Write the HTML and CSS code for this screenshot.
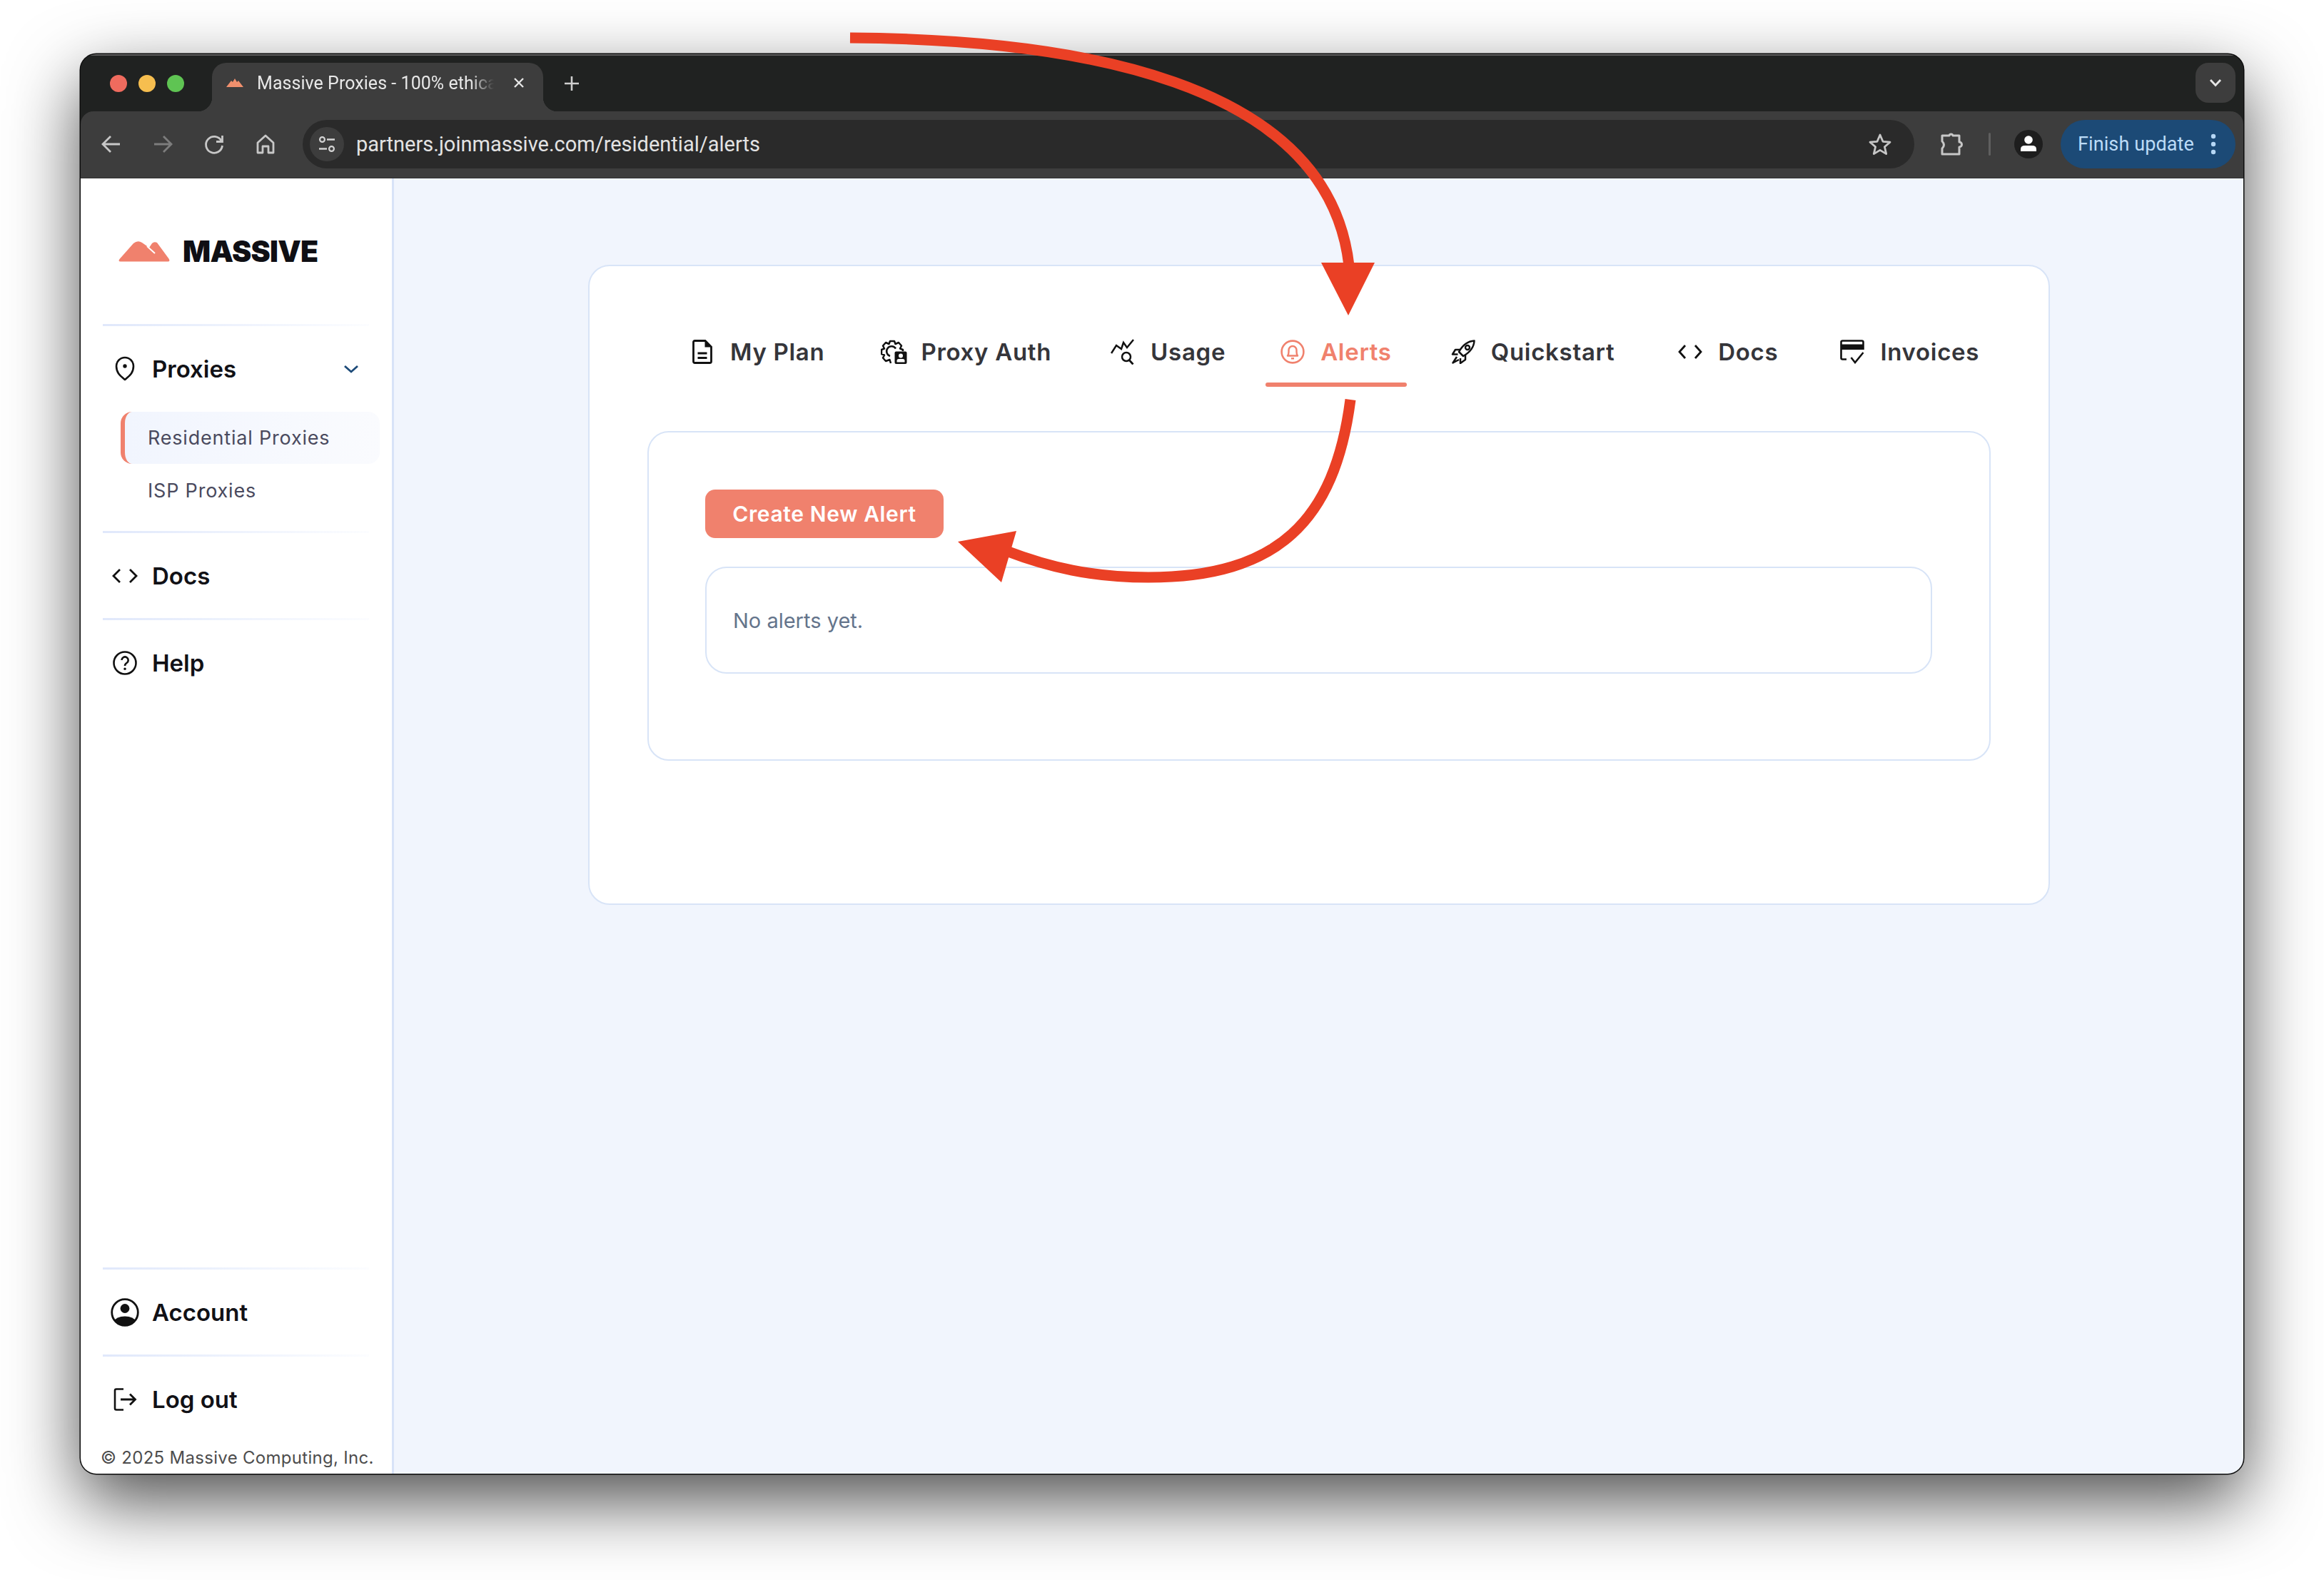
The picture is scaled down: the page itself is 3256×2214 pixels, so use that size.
FILE: index.html
```html
<!DOCTYPE html>
<html lang="en">
<head>
<meta charset="utf-8">
<title>Massive Proxies - Alerts</title>
<link rel="stylesheet" href="styles.css">
</head>
<body>
<div class="window">
  <header class="titlebar">
    <div class="lights"><span class="light red"></span><span class="light yellow"></span><span class="light green"></span></div>
    <div class="tab">
      <svg class="favicon" viewBox="0 0 26 14"><path d="M1 13 L8 4 L10 6 L13 1 L16 6 L18 4 L25 13Z" fill="#f0906d"/></svg>
      <span class="tab-title">Massive Proxies - 100% ethical</span>
      <svg class="tab-close" viewBox="0 0 20 20"><path d="M4 4 L16 16 M16 4 L4 16" stroke="#e6e6e6" stroke-width="2.4" fill="none"/></svg>
    </div>
    <svg class="new-tab" viewBox="0 0 22 22"><path d="M11 1 V21 M1 11 H21" stroke="#cfcfcf" stroke-width="2.6" fill="none"/></svg>
    <div class="tab-menu"><svg viewBox="0 0 18 12"><path d="M2 2 L9 9.5 L16 2" stroke="#e6e6e6" stroke-width="2.8" fill="none"/></svg></div>
  </header>
  <div class="toolbar">
    <div class="nav-btns">
      <svg class="tool" viewBox="0 0 44 44"><path d="M34 22 H11 M21 11 L10 22 L21 33" stroke="#c7c7c7" stroke-width="2.8" fill="none"/></svg>
      <svg class="tool" viewBox="0 0 44 44"><path d="M10 22 H33 M23 11 L34 22 L23 33" stroke="#7d7d7d" stroke-width="2.8" fill="none"/></svg>
      <svg class="tool" viewBox="0 0 44 44"><path d="M32 17 A11.5 11.5 0 1 0 33.5 24" stroke="#c7c7c7" stroke-width="2.8" fill="none"/><path d="M33.5 10 V18.5 H25" stroke="#c7c7c7" stroke-width="2.8" fill="none"/></svg>
      <svg class="tool" viewBox="0 0 44 44"><path d="M11 20 L22 10 L33 20 V34 H26 V25 H18 V34 H11Z" stroke="#c7c7c7" stroke-width="2.8" fill="none" stroke-linejoin="round"/></svg>
    </div>
    <div class="urlbar">
      <span class="site-info"><svg viewBox="0 0 26 26"><circle cx="6.5" cy="6.5" r="3.4" stroke="#d4d4d4" stroke-width="2.2" fill="none"/><path d="M13 6.5 H24 M2 19.5 H13" stroke="#d4d4d4" stroke-width="2.4"/><circle cx="19.5" cy="19.5" r="3.4" stroke="#d4d4d4" stroke-width="2.2" fill="none"/></svg></span>
      <span class="url">partners.joinmassive.com/residential/alerts</span>
      <svg class="tool star" viewBox="0 0 44 44"><path d="M22 9 L26 18.3 L36 19.2 L28.4 25.8 L30.7 35.6 L22 30.4 L13.3 35.6 L15.6 25.8 L8 19.2 L18 18.3Z" stroke="#c7c7c7" stroke-width="2.8" fill="none" stroke-linejoin="round"/></svg>
    </div>
    <svg class="tool ext" viewBox="0 0 44 44"><path d="M9 10 H19 A2.600 2.600 0 0 1 24 10 H33 V19 A3.200 3.200 0 0 1 33 26 V36 H9 V28 Q14 23 9 18Z" stroke="#c7c7c7" stroke-width="3" fill="none" stroke-linejoin="round"/></svg>
    <span class="tool-sep"></span>
    <span class="avatar"><svg viewBox="0 0 40 40"><circle cx="20" cy="14" r="5.8" fill="#fff"/><path d="M9 30 V27 Q9 22 15 22 H25 Q31 22 31 27 V30Z" fill="#fff"/></svg></span>
    <div class="update"><span>Finish update</span><svg viewBox="0 0 8 32"><circle cx="4" cy="5" r="3.2" fill="#b6d7f5"/><circle cx="4" cy="16" r="3.2" fill="#b6d7f5"/><circle cx="4" cy="27" r="3.2" fill="#b6d7f5"/></svg></div>
  </div>

  <div class="app">
    <aside class="sidebar">
      <div class="logo">
        <svg class="logo-mark" viewBox="0 0 72 30"><path d="M3 29.5 Q-1 29.5 1.5 26 L21 4 Q27 -1 33 3 L43 10 L47 4 Q50 1 54 3 L70.5 25.5 Q73 29.5 69 29.5Z" fill="#f0816d"/><path d="M40 8 L51 18" stroke="#fff" stroke-width="2" fill="none"/></svg>
        <span class="logo-text">MASSIVE</span>
      </div>
      <div class="divider"></div>
      <div class="nav-row">
        <svg class="nav-icon" viewBox="0 0 36 36"><path d="M18 33.5 C13 29 6 25 6 14.5 A12 12 0 0 1 30 14.5 C30 25 23 29 18 33.5Z" transform="translate(0 -.5)" stroke="#111" stroke-width="2.6" fill="none" stroke-linejoin="round"/><circle cx="18" cy="14" r="2.7" fill="#111"/></svg>
        <span>Proxies</span>
        <svg class="chevron" viewBox="0 0 22 12"><path d="M2 2 L11 10 L20 2" stroke="#1c4a78" stroke-width="2.8" fill="none"/></svg>
      </div>
      <a class="sub-item active">Residential Proxies</a>
      <a class="sub-item">ISP Proxies</a>
      <div class="divider after-sub"></div>
      <div class="nav-row">
        <svg class="nav-icon" viewBox="0 0 36 36"><path d="M11 9 L2 18 L11 27 M25 9 L34 18 L25 27" stroke="#111" stroke-width="2.8" fill="none"/></svg>
        <span>Docs</span>
      </div>
      <div class="divider"></div>
      <div class="nav-row">
        <svg class="nav-icon" viewBox="0 0 36 36"><circle cx="18" cy="18" r="15.5" stroke="#111" stroke-width="2.6" fill="none"/><path d="M13.5 14 A4.6 4.6 0 1 1 20.5 18 Q18 19.5 18 22" stroke="#111" stroke-width="2.6" fill="none"/><circle cx="18" cy="26.2" r="1.7" fill="#111"/></svg>
        <span>Help</span>
      </div>
      <div class="sidebar-bottom">
        <div class="divider"></div>
        <div class="nav-row">
          <svg class="nav-icon large" viewBox="0 0 40 40"><defs><clipPath id="acc"><circle cx="20" cy="20" r="18"/></clipPath></defs><circle cx="20" cy="20" r="18.3" stroke="#111" stroke-width="2.8" fill="none"/><circle cx="20" cy="14.5" r="6.4" fill="#111"/><path d="M4 40 V33 Q8 25.500 20 25.500 Q32 25.500 36 33 V40Z" fill="#111" clip-path="url(#acc)"/></svg>
          <span>Account</span>
        </div>
        <div class="divider"></div>
        <div class="nav-row">
          <svg class="nav-icon" viewBox="0 0 36 36"><path d="M16 3.500 H6 Q4 3.500 4 5.500 V30.500 Q4 32.500 6 32.500 H16" stroke="#111" stroke-width="2.600" fill="none"/><path d="M12 18 H32 M25 10.500 L32.500 18 L25 25.500" stroke="#111" stroke-width="2.800" fill="none"/></svg>
          <span>Log out</span>
        </div>
        <p class="copyright">© 2025 Massive Computing, Inc.</p>
      </div>
    </aside>

    <main class="main">
      <section class="card">
        <nav class="tabs">
          <a class="page-tab"><svg class="tab-icon" viewBox="0 0 34 34"><path d="M6.500 1.500 H21 L29.500 10 V30.500 Q29.500 32.500 27.500 32.500 H6.500 Q4.500 32.500 4.500 30.500 V3.500 Q4.500 1.500 6.500 1.500Z" stroke="#111" stroke-width="2.800" fill="none"/><path d="M20.500 1.500 V10.500 H29.500 Z" fill="#111"/><path d="M10.500 19 H23.500 M10.500 25.500 H23.500" stroke="#111" stroke-width="2.800"/></svg>My Plan</a>
          <a class="page-tab"><svg class="tab-icon wide" viewBox="0 0 37 34"><path d="M14 33 L12.500 28 L7 30 L3 25.500 L5 21.500 L1 20 V14 L5 12.500 L3 8.500 L7 4 L11.500 6 L13 2 H19 L20.500 6 L25 4 L29 8.500 L27 12.500 L31 14 V16" stroke="#111" stroke-width="2.500" fill="none" stroke-linejoin="round"/><path d="M21 12.500 A7 7 0 1 0 13 23" stroke="#111" stroke-width="2.500" fill="none"/><rect x="19.500" y="16.500" width="17" height="17.500" rx="2" fill="#111"/><circle cx="28" cy="22.500" r="3" fill="#fff"/><path d="M22.500 31.500 V29.500 Q22.500 27 25 27 H31 Q33.500 27 33.500 29.500 V31.500Z" fill="#fff"/></svg>Proxy Auth</a>
          <a class="page-tab"><svg class="tab-icon tall" viewBox="0 0 34 36"><path d="M1 20 L8 9 L15 14 L18 5 L23 12 L32 1" stroke="#111" stroke-width="2.500" fill="none"/><circle cx="22" cy="25" r="6" stroke="#111" stroke-width="2.500" fill="none"/><path d="M26 29.500 L31.500 35.500" stroke="#111" stroke-width="2.800"/></svg>Usage</a>
          <a class="page-tab current"><svg class="tab-icon" viewBox="0 0 34 34"><circle cx="17" cy="17" r="15.400" stroke="#f0816d" stroke-width="2.600" fill="none"/><path d="M10 22.500 H24 Q22.500 20.500 22.500 17 V14.500 A5.500 5.500 0 0 0 11.500 14.500 V17 Q11.500 20.500 10 22.500Z" stroke="#f0816d" stroke-width="2.400" fill="none" stroke-linejoin="round"/><path d="M15 26.300 H19" stroke="#f0816d" stroke-width="2.400"/></svg>Alerts</a>
          <a class="page-tab"><svg class="tab-icon" viewBox="0 0 34 34"><path d="M32.500 1.500 C24 2 16 8 11 17 L17 23 C26 18 32 10 32.500 1.500Z" stroke="#111" stroke-width="2.500" fill="none" stroke-linejoin="round"/><circle cx="23" cy="11" r="3" stroke="#111" stroke-width="2.400" fill="none"/><path d="M12.500 14 H6 L2 20.500 L9.500 20.500 M20 21.500 V28 L13 33 V26" stroke="#111" stroke-width="2.500" fill="none" stroke-linejoin="round"/><path d="M8 24 L2.500 32.500 L11 28" stroke="#111" stroke-width="2.500" fill="none" stroke-linejoin="round"/></svg>Quickstart</a>
          <a class="page-tab"><svg class="tab-icon" viewBox="0 0 34 34"><path d="M10 8 L2 17 L10 26 M24 8 L32 17 L24 26" stroke="#111" stroke-width="2.800" fill="none"/></svg>Docs</a>
          <a class="page-tab"><svg class="tab-icon" viewBox="0 0 34 34"><path d="M9 27.500 H3.500 Q1.500 27.500 1.500 25.500 V3.500 Q1.500 1.500 3.500 1.500 H30.500 Q32.500 1.500 32.500 3.500 V14" stroke="#111" stroke-width="2.600" fill="none"/><rect x="1.500" y="6.500" width="31" height="7.500" fill="#111"/><path d="M15.500 25 L21 32 L32.500 18" stroke="#111" stroke-width="2.600" fill="none"/></svg>Invoices</a>
        </nav>
        <div class="panel">
          <button class="create-btn">Create New Alert</button>
          <div class="empty">No alerts yet.</div>
        </div>
      </section>
    </main>
  </div>
</div>

<svg class="annotations" viewBox="0 0 3256 2214">
  <path d="M1191 53 C1500 55 1860 110 1890 372" stroke="#ea4025" stroke-width="15" fill="none"/>
  <polygon points="1851,368 1926,368 1889,442" fill="#ea4025"/>
  <path d="M1892 560 C1870 730 1790 809 1609 809 C1530 809 1470 795 1410 772" stroke="#ea4025" stroke-width="15" fill="none"/>
  <polygon points="1342,759 1424,744 1403,816" fill="#ea4025"/>
</svg>
</body>
</html>
```
FILE: styles.css
```css
* { box-sizing: border-box; }
html, body { margin: 0; padding: 0; }
body {
  position: relative;
  width: 3256px;
  height: 2214px;
  padding: 76px 113px 0;
  background: #fff;
  overflow: hidden;
  font-family: "Inter", "Liberation Sans", sans-serif;
}
.window {
  width: 3030px;
  height: 1989px;
  display: flex;
  flex-direction: column;
  border-radius: 22px;
  overflow: hidden;
  background: #202221;
  box-shadow: 0 0 0 1.5px #0c0c0c, 0 38px 100px rgba(0, 0, 0, .7);
}

/* browser chrome */
.titlebar {
  height: 80px;
  flex: none;
  display: flex;
  align-items: flex-end;
  background: #202221;
  border-top: 2px solid #5c5c5c;
}
.lights { display: flex; gap: 16px; align-self: center; margin-left: 41px; }
.light { width: 24px; height: 24px; border-radius: 50%; }
.red { background: #ef6b5e; }
.yellow { background: #f6be4f; }
.green { background: #5fc453; }
.tab {
  position: relative;
  margin-left: 39px;
  width: 464px;
  height: 68px;
  display: flex;
  align-items: center;
  padding: 0 0 12px 19px;
  background: #3d3d3d;
  border-radius: 20px 20px 0 0;
}
.tab::before, .tab::after {
  content: "";
  position: absolute;
  bottom: 0;
  width: 20px;
  height: 20px;
}
.tab::before { left: -20px; background: radial-gradient(circle at 0 0, #202221 20px, #3d3d3d 20.5px); }
.tab::after { right: -20px; background: radial-gradient(circle at 100% 0, #202221 20px, #3d3d3d 20.5px); }
.favicon { width: 26px; height: 14px; flex: none; }
.tab-title {
  margin-left: 18px;
  width: 332px;
  white-space: nowrap;
  overflow: hidden;
  font: 400 25px "Roboto", sans-serif;
  letter-spacing: .05px;
  color: #e8e8e8;
  -webkit-mask-image: linear-gradient(90deg, #000 90%, transparent);
  mask-image: linear-gradient(90deg, #000 90%, transparent);
}
.tab-close { width: 20px; height: 20px; margin-left: 25px; flex: none; }
.new-tab { width: 22px; height: 22px; align-self: center; margin-left: 29px; }
.tab-menu {
  width: 56px;
  height: 56px;
  margin: 10px 11px 0 auto;
  align-self: flex-start;
  display: flex;
  align-items: center;
  justify-content: center;
  background: #3d3d3d;
  border-radius: 18px;
}
.tab-menu svg { width: 18px; height: 12px; }

.toolbar {
  height: 94px;
  flex: none;
  display: flex;
  align-items: center;
  padding-bottom: 1px;
  background: #3d3d3d;
  border-bottom: 1px solid #2f2f2f;
  border-radius: 18px 18px 0 0;
}
.nav-btns { display: flex; gap: 28px; margin-left: 21px; }
.tool { width: 44px; height: 44px; flex: none; }
.urlbar {
  width: 2258px;
  height: 68px;
  margin-left: 30px;
  display: flex;
  align-items: center;
  padding: 0 26px 0 10px;
  background: #2a2a2a;
  border-radius: 34px;
}
.site-info {
  width: 48px;
  height: 48px;
  flex: none;
  display: flex;
  align-items: center;
  justify-content: center;
  background: #3d3d3d;
  border-radius: 50%;
}
.site-info svg { width: 26px; height: 26px; }
.url { margin-left: 17px; font: 400 29px "Roboto", sans-serif; color: #e3e3e3; }
.star { margin-left: auto; }
.ext { margin-left: 30px; }
.tool-sep { width: 3px; height: 32px; margin-left: 30px; background: #5f5f5f; border-radius: 2px; }
.avatar { width: 40px; height: 40px; margin-left: 33px; background: #1e1e1e; border-radius: 50%; }
.avatar svg { display: block; width: 40px; height: 40px; }
.update {
  width: 245px;
  height: 68px;
  margin-left: 25px;
  display: flex;
  align-items: center;
  padding-left: 24px;
  background: #1c4a76;
  border-radius: 34px;
  font: 400 27px "Roboto", sans-serif;
  letter-spacing: .1px;
  color: #bcdcf7;
}
.update svg { width: 8px; height: 32px; margin-left: 23px; }

/* app layout */
.app { flex: 1; min-height: 0; display: flex; }
.sidebar {
  width: 439px;
  flex: none;
  display: flex;
  flex-direction: column;
  padding: 0 32px 0 31px;
  background: #fff;
  border-right: 3px solid #d8e3f8;
}
.logo { height: 204px; flex: none; display: flex; align-items: center; gap: 18px; padding-left: 22px; }
.logo-mark { width: 72px; height: 30px; flex: none; }
.logo-text { font-size: 41px; font-weight: 900; color: #0f0f14; letter-spacing: -.8px; line-height: 1; }
.divider { height: 3px; flex: none; background: linear-gradient(90deg, #e0e8fb, #fcfdff); }
.divider.after-sub { margin-top: 20px; }
.nav-row {
  height: 119px;
  flex: none;
  display: flex;
  align-items: center;
  gap: 20px;
  padding-left: 13px;
  font-size: 33px;
  font-weight: 600;
  color: #111116;
}
.nav-icon { width: 36px; height: 36px; flex: none; }
.nav-icon.large { width: 40px; height: 40px; margin: 0 -2px; }
.chevron { width: 22px; height: 12px; margin-left: auto; margin-right: 14px; }
.sub-item {
  width: 363px;
  height: 73px;
  flex: none;
  display: flex;
  align-items: center;
  margin: 1px 0 0 25px;
  padding-left: 38px;
  border-radius: 16px;
  font-size: 27px;
  letter-spacing: .8px;
  color: #4a4a5e;
}
.sub-item.active {
  padding-left: 32px;
  border-left: 6px solid #f0816d;
  background: linear-gradient(90deg, #f1f5fe, #fafbfe);
}
.sidebar-bottom { margin-top: auto; display: flex; flex-direction: column; }
.copyright {
  height: 45px;
  margin: 0 0 0 -3px;
  white-space: nowrap;
  font-size: 24px;
  line-height: 46px;
  letter-spacing: .3px;
  color: #4d4d4d;
}

.main { flex: 1; min-width: 0; padding: 121px 271px 0 272px; background: #f1f5fd; }
.card {
  height: 897px;
  padding: 79px 81px 0;
  background: #fff;
  border: 2px solid #d8e4f7;
  border-radius: 30px;
}
.tabs { display: flex; gap: 37px; padding-left: 39px; }
.page-tab {
  position: relative;
  height: 90px;
  display: flex;
  align-items: flex-start;
  gap: 22px;
  padding: 23px 21px 0;
  white-space: nowrap;
  font-size: 33px;
  font-weight: 600;
  line-height: 36px;
  letter-spacing: .7px;
  color: #35353a;
}
.page-tab:nth-child(3) { margin-left: 4px; }
.page-tab:nth-child(4) { margin-left: -2px; }
.page-tab:nth-child(5) { margin-left: 4px; }
.page-tab:nth-child(6) { margin-left: 10px; }
.page-tab:nth-child(7) { margin-left: 8px; }
.tab-icon { width: 34px; height: 34px; flex: none; margin-top: 1px; }
.tab-icon.wide { width: 37px; margin-right: -3px; }
.tab-icon.tall { height: 36px; margin-top: 0; }
.page-tab.current { color: #f0816d; }
.page-tab.current::after {
  content: "";
  position: absolute;
  left: 0;
  right: 0;
  bottom: 0;
  height: 6px;
  background: #f0816d;
  border-radius: 3px;
}
.panel {
  height: 462px;
  margin-top: 62px;
  display: flex;
  flex-direction: column;
  align-items: flex-start;
  padding: 80px 80px 0 79px;
  border: 2px solid #d8e4f7;
  border-radius: 30px;
}
.create-btn {
  width: 334px;
  height: 68px;
  padding: 0;
  border: 0;
  background: #f0816d;
  border-radius: 14px;
  font: 600 30px "Inter", sans-serif;
  letter-spacing: .63px;
  color: #fff;
}
.empty {
  width: 100%;
  height: 150px;
  margin-top: 40px;
  display: flex;
  align-items: center;
  padding-left: 37px;
  border: 2px solid #d8e4f7;
  border-radius: 30px;
  font-size: 29px;
  color: #64748b;
}

/* hand-drawn annotation arrows over the screenshot */
.annotations { position: absolute; left: 0; top: 0; width: 3256px; height: 2214px; pointer-events: none; }
```
